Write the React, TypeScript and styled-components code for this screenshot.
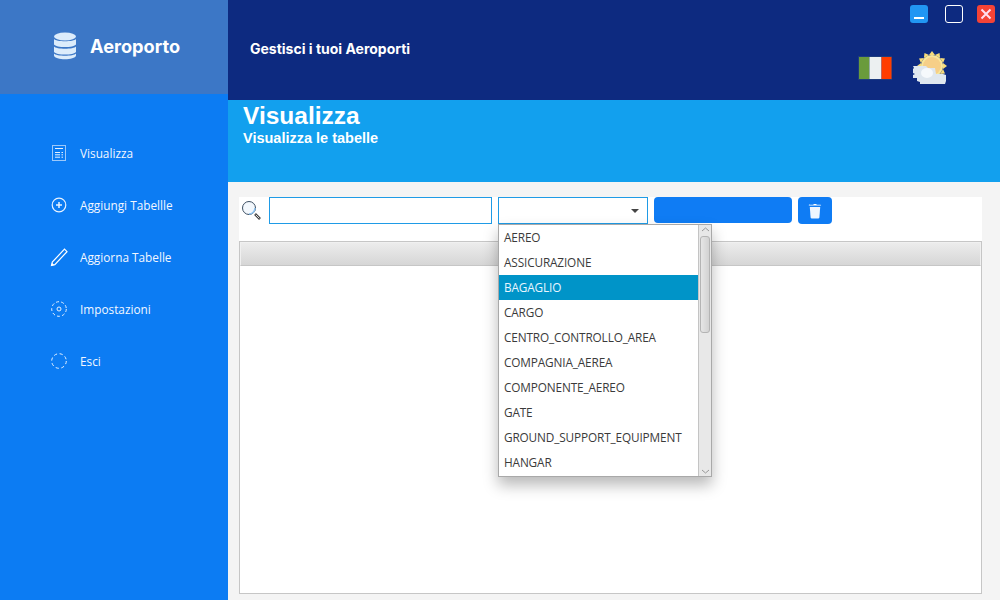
import React from "react";
import styled, { createGlobalStyle } from "styled-components";

const Global = createGlobalStyle`
  html, body { margin: 0; padding: 0; width: 1000px; height: 600px; overflow: hidden; }
  #root { width: 1000px; height: 600px; }
  * { box-sizing: border-box; }
`;
const Frame = styled.div`
  display: flex; width: 1000px; height: 600px; background: #f4f4f4;
  font-family: "Noto Sans", "Open Sans", sans-serif;
`;
const Sidebar = styled.aside`
  width: 228px; flex: none; background: #0c7cf3; display: flex; flex-direction: column;
`;
const Brand = styled.div`
  height: 94px; background: #3c77c6; display: flex; align-items: center; gap: 13px; padding: 0 0 2px 53px;
`;
const BrandName = styled.span`
  font: 700 18.200px Inter, "Liberation Sans", sans-serif; color: #fff;
`;
const Nav = styled.nav`
  display: flex; flex-direction: column; padding-top: 33px;
`;
const NavItem = styled.div`
  height: 52px; display: flex; align-items: center; padding-left: 48px; gap: 10px;
  font-family: "Open Sans", sans-serif; font-size: 11.800px; color: #f2f7ff;
`;
const NavIcon = styled.svg`
  width: 22px; height: 22px; flex: none; fill: none; stroke: #e8f2ff; stroke-width: 1;
`;
const Main = styled.main`
  flex: 1; display: flex; flex-direction: column; min-width: 0; position: relative;
`;
const Header = styled.header`
  height: 100px; background: #0d2a80; position: relative; padding: 41px 0 0 22px;
`;
const HeaderTitle = styled.div`
  font: 700 14px Inter, "Liberation Sans", sans-serif; color: #fff; line-height: 16px;
`;
const WinControls = styled.div`
  position: absolute; top: 5px; right: 5px; display: flex; gap: 14px;
`;
const MinimizeButton = styled.div`
  width: 18px; height: 18px; border-radius: 3px; background: #2196f3; margin-right: 3px;
  display: flex; align-items: center; justify-content: center;
`;
const MaximizeButton = styled.div`
  width: 18px; height: 18px; border-radius: 3px; border: 1.500px solid #fff;
`;
const CloseButton = styled.div`
  width: 18px; height: 18px; border-radius: 3px; background: #f44336;
  display: flex; align-items: center; justify-content: center;
`;
const HeaderIcons = styled.div`
  position: absolute; top: 50px; left: 630px; display: flex; gap: 20px; align-items: center;
`;
const Band = styled.div`
  height: 82px; background: #12a0ee; padding: 2px 0 0 15px; color: #fff;
  font-family: "Liberation Sans", Arial, sans-serif; font-weight: 700;
`;
const BandTitle = styled.div`
  font-size: 24.500px; line-height: 28px;
`;
const BandSub = styled.div`
  font-size: 14.500px; line-height: 17px;
`;
const Panel = styled.div`
  margin: 15px 18px 6px 11px; flex: 1; background: #fff; display: flex; flex-direction: column;
  position: relative;
`;
const Toolbar = styled.div`
  height: 44px; display: flex; align-items: flex-start; padding-left: 1px;
`;
const SearchBox = styled.div`
  width: 29px; height: 27px; flex: none; padding-top: 2px;
`;
const Field = styled.div`
  width: 223px; height: 27px; background: #fff; border: 1px solid #1f9be6; flex: none;
`;
const Select = styled.div`
  width: 150px; height: 27px; margin-left: 6px; background: #fff; border: 1px solid #1f9be6; flex: none;
  display: flex; align-items: center; justify-content: flex-end; padding-right: 8px;
`;
const Caret = styled.div`
  width: 0; height: 0; border-left: 4px solid transparent; border-right: 4px solid transparent;
  border-top: 4px solid #444;
`;
const WideButton = styled.div`
  width: 138px; height: 26px; margin-left: 6px; background: #0f7cf4; border-radius: 4px; flex: none;
`;
const IconButton = styled.div`
  width: 34px; height: 27px; margin-left: 6px; background: #0f7cf4; border-radius: 4px; flex: none;
  display: flex; align-items: center; justify-content: center;
`;
const Table = styled.div`
  flex: 1; border: 1px solid #c6c6c6; display: flex; flex-direction: column; background: #fff;
`;
const TableHead = styled.div`
  height: 24px; background: linear-gradient(#ececec, #d6d6d6); border: 1px solid #f0f0f0;
  border-bottom: 1px solid #c6c6c6;
`;
const Dropdown = styled.div`
  position: absolute; left: 259px; top: 27px; width: 214px; height: 253px; background: #fff;
  border: 1px solid #a9a9a9; display: flex; box-shadow: 0 8px 14px rgba(0,0,0,.28); z-index: 5;
`;
const List = styled.div`
  flex: 1; display: flex; flex-direction: column; min-width: 0; font-family: "Open Sans", sans-serif;
`;
const Option = styled.div<{ $active?: boolean }>`
  height: 25px; flex: none; line-height: 25px; padding-left: 5px; font-size: 11.800px; letter-spacing: -0.14px;
  color: ${p => (p.$active ? "#e8f6ff" : "#3a3a3a")}; background: ${p => (p.$active ? "#0094c8" : "transparent")};
`;
const ScrollTrack = styled.div`
  width: 13px; flex: none; background: #e8e8e8; border-left: 1px solid #c4c4c4; display: flex; flex-direction: column;
  align-items: center;
`;
const ScrollBtn = styled.svg`
  width: 11px; height: 11px; flex: none; fill: none; stroke: #999; stroke-width: 1;
`;
const Thumb = styled.div`
  width: 10px; height: 97px; background: linear-gradient(90deg, #e6e6e6, #d2d2d2); border: 1px solid #b4b4b4; border-radius: 3px;
  flex: none;
`;
const Spacer = styled.div` flex: 1; `;

const items = ["AEREO","ASSICURAZIONE","BAGAGLIO","CARGO","CENTRO_CONTROLLO_AREA","COMPAGNIA_AEREA","COMPONENTE_AEREO","GATE","GROUND_SUPPORT_EQUIPMENT","HANGAR"];

const rays = Array.from({ length: 12 }, (_, i) => i * 30);

export default function App() {
  return (
    <Frame>
      <Global />
      <Sidebar>
        <Brand>
          <svg width="24" height="28" viewBox="0 0 24 28">
            <ellipse cx="12" cy="4.500" rx="11" ry="4" fill="#dcecfb" />
            <path d="M1 7c2 3 20 3 22 0v5.500c-2 3.400-20 3.400-22 0z" fill="#dcecfb" />
            <path d="M1 15c2 3 20 3 22 0v5.500c-2 3.400-20 3.400-22 0z" fill="#dcecfb" transform="translate(0 -.5)" />
            <path d="M1 21.500c2 3 20 3 22 0v2c-1 5-21 5-22 0z" fill="#dcecfb" />
          </svg>
          <BrandName>Aeroporto</BrandName>
        </Brand>
        <Nav>
          <NavItem>
            <NavIcon viewBox="0 0 22 22">
              <rect x="4.500" y="3.500" width="13" height="15" stroke="#9cc8fa" />
              <path d="M7 6.500h8M7 10.500h5M13.500 10.500h1.500M7 12.800h5M13.500 12.800h1.500M7 15.200h5M13.500 15.200h1.500" />
            </NavIcon>
            Visualizza
          </NavItem>
          <NavItem>
            <NavIcon viewBox="0 0 22 22">
              <circle cx="11" cy="11" r="6.800" strokeWidth="1.200" />
              <path d="M11 8v6M8 11h6" strokeWidth="1.500" />
            </NavIcon>
            Aggiungi Tabellle
          </NavItem>
          <NavItem>
            <NavIcon viewBox="0 0 22 22">
              <path d="M3.500 19.500l.8-3.500L16.500 3.200l2.500 2.500L6.800 18.600z" stroke="#fff" strokeWidth="1.200" />
              <path d="M3 20l1-3.200 2.200 2.200z" fill="#fff" stroke="none" />
            </NavIcon>
            Aggiorna Tabelle
          </NavItem>
          <NavItem>
            <NavIcon viewBox="0 0 22 22">
              <circle cx="11" cy="11" r="7.300" strokeDasharray="3 2.200" />
              <circle cx="11" cy="11" r="2" />
            </NavIcon>
            Impostazioni
          </NavItem>
          <NavItem>
            <NavIcon viewBox="0 0 22 22">
              <circle cx="11" cy="11" r="7.300" strokeDasharray="3.200 2.600" />
            </NavIcon>
            Esci
          </NavItem>
        </Nav>
      </Sidebar>
      <Main>
        <Header>
          <HeaderTitle>Gestisci i tuoi Aeroporti</HeaderTitle>
          <WinControls>
            <MinimizeButton>
              <svg width="18" height="18" viewBox="0 0 18 18"><rect x="4" y="12" width="10" height="2" fill="#fff" /></svg>
            </MinimizeButton>
            <MaximizeButton />
            <CloseButton>
              <svg width="18" height="18" viewBox="0 0 18 18"><path d="M4.500 4.500l9 9M13.500 4.500l-9 9" stroke="#fde" strokeWidth="2" /></svg>
            </CloseButton>
          </WinControls>
          <HeaderIcons>
            <svg width="34" height="24" viewBox="0 0 34 24">
              <rect width="34" height="24" fill="#1d3c7e" />
              <rect x="1" y="1" width="10.500" height="22" fill="#6a9b3c" />
              <rect x="11.500" y="1" width="12" height="22" fill="#ecf0f1" />
              <rect x="23.500" y="1" width="10" height="22" fill="#ff3d00" />
            </svg>
            <svg width="36" height="36" viewBox="0 0 36 36">
              {rays.map(a => (
                <path key={a} d="M17 5L20 1l3 4z" fill="#f7dc7a" transform={`rotate(${a} 20 16)`} />
              ))}
              <circle cx="20" cy="16" r="11" fill="#f9e79a" />
              <circle cx="20" cy="16" r="9" fill="#f6cf88" />
              <path d="M1 16h13l2 2h7l1 6h7l3 1v6l-1 3H8v-2l-3-1v-3H1v-3l2-1-2-1v-4l1-1z" fill="#dfe7ef" />
              <ellipse cx="15" cy="23" rx="6" ry="5" fill="#f6f9fc" />
            </svg>
          </HeaderIcons>
        </Header>
        <Band>
          <BandTitle>Visualizza</BandTitle>
          <BandSub>Visualizza le tabelle</BandSub>
        </Band>
        <Panel>
          <Toolbar>
            <SearchBox>
              <svg width="22" height="22" viewBox="0 0 22 22" fill="none">
                <circle cx="9" cy="9" r="6.500" stroke="#3d4f63" strokeWidth="1" fill="#f3f8fd" />
                <path d="M9 15a6 6 0 0 0 6-6" stroke="#8ec2ee" strokeWidth="1.600" />
                <path d="M15 15l5 5" stroke="#444" strokeWidth="2.600" />
                <path d="M15.800 15.800l3.500 3.500" stroke="#ddd" strokeWidth="1" />
              </svg>
            </SearchBox>
            <Field />
            <Select><Caret /></Select>
            <WideButton />
            <IconButton>
              <svg width="14" height="16" viewBox="0 0 14 16">
                <path d="M2 1.800h3.500V1h3v.8H12.500a.6.600 0 0 1 .6.700H.9a.6.600 0 0 1 1.100-.7z" fill="#fff" />
                <path d="M1.800 4h10.400l-.8 10.500c-.1.700-.5 1-1.200 1H3.800c-.7 0-1.100-.3-1.200-1z" fill="#eef6ff" />
              </svg>
            </IconButton>
          </Toolbar>
          <Table>
            <TableHead />
          </Table>
          <Dropdown>
            <List>
              {items.map((t, i) => <Option key={t} $active={i === 2}>{t}</Option>)}
            </List>
            <ScrollTrack>
              <ScrollBtn viewBox="0 0 11 11"><path d="M2 6l3.500-3L9 6" /></ScrollBtn>
              <Thumb />
              <Spacer />
              <ScrollBtn viewBox="0 0 11 11"><path d="M2 5l3.500 3L9 5" /></ScrollBtn>
            </ScrollTrack>
          </Dropdown>
        </Panel>
      </Main>
    </Frame>
  );
}
